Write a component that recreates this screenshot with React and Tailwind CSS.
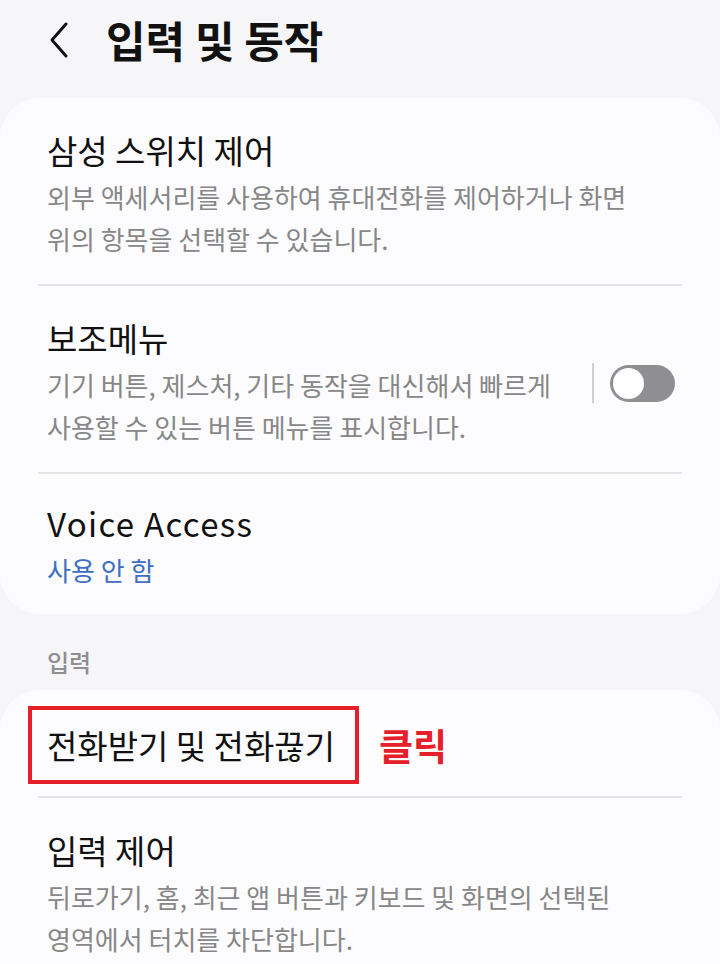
import React from "react";

const font = { fontFamily: '"Noto Sans CJK KR", "Noto Sans", sans-serif' };

const Divider = () => <div className="mx-[38px] h-[2px] bg-[#e4e4e7]" />;

const Item = ({ title, lines, sub, right, pad = "pt-[32px] pb-[24px]", titleClass = "" }) => (
  <div className={`flex items-center px-[47px] ${pad}`}>
    <div className="flex-1">
      <div className={`text-[33px] leading-[40px] text-[#111] ${titleClass}`}>{title}</div>
      {lines && (
        <div className="mt-[6px] text-[26px] leading-[42px] text-[#878787]">
          {lines.map((l) => (
            <div key={l}>{l}</div>
          ))}
        </div>
      )}
      {sub && <div className="mt-[6px] text-[26px] leading-[42px] text-[#3d6fc4]">{sub}</div>}
    </div>
    {right}
  </div>
);

const Toggle = () => (
  <div className="flex items-center gap-[16px] -mr-[2px]">
    <div className="h-[40px] w-[2px] bg-[#cfcfd3]" />
    <div className="relative h-[37px] w-[65px] rounded-full bg-[#8e8e93]">
      <div className="absolute left-[3px] top-[3px] h-[31px] w-[31px] rounded-full bg-white" />
    </div>
  </div>
);

export default function App() {
  return (
    <div style={font} className="min-h-[964px] bg-[#f6f6f8] overflow-hidden">
      <header className="flex h-[98px] items-start pt-[12px] pl-[44px]">
        <svg width="30" height="44" viewBox="0 0 30 44" className="mt-[4px]">
          <path d="M22 8 L8 24 L22 40" fill="none" stroke="#111" strokeWidth="3" strokeLinecap="round" strokeLinejoin="round" />
        </svg>
        <h1 className="ml-[32px] text-[43px] font-bold leading-[54px] text-[#111]">입력 및 동작</h1>
      </header>

      <section className="rounded-[40px] bg-[#fcfcfe]">
        <Item
          title="삼성 스위치 제어"
          lines={["외부 액세서리를 사용하여 휴대전화를 제어하거나 화면", "위의 항목을 선택할 수 있습니다."]}
        />
        <Divider />
        <Item
          title="보조메뉴"
          lines={["기기 버튼, 제스처, 기타 동작을 대신해서 빠르게", "사용할 수 있는 버튼 메뉴를 표시합니다."]}
          right={<Toggle />}
        />
        <Divider />
        <Item
          title="Voice Access"
          titleClass="tracking-[0.04em]"
          sub="사용 안 함"
          pad="pt-[29px] pb-[23px]"
        />
      </section>

      <div className="px-[47px] pt-[34px] pb-[14px] text-[24px] font-medium leading-[28px] text-[#8e8e93]">입력</div>

      <section className="rounded-t-[40px] bg-[#fcfcfe]">
        <div className="flex items-center pl-[28px] pt-[16px] pb-[12px]">
          <div className="border-[4px] border-[#e5202a] pl-[15px] pr-[20px] py-[15px] text-[33px] leading-[40px] text-[#111]">
            전화받기 및 전화끊기
          </div>
          <span className="ml-[20px] text-[37px] font-bold leading-[40px] text-[#e5202a]">클릭</span>
        </div>
        <Divider />
        <Item
          title="입력 제어"
          lines={["뒤로가기, 홈, 최근 앱 버튼과 키보드 및 화면의 선택된", "영역에서 터치를 차단합니다."]}
        />
      </section>
    </div>
  );
}
